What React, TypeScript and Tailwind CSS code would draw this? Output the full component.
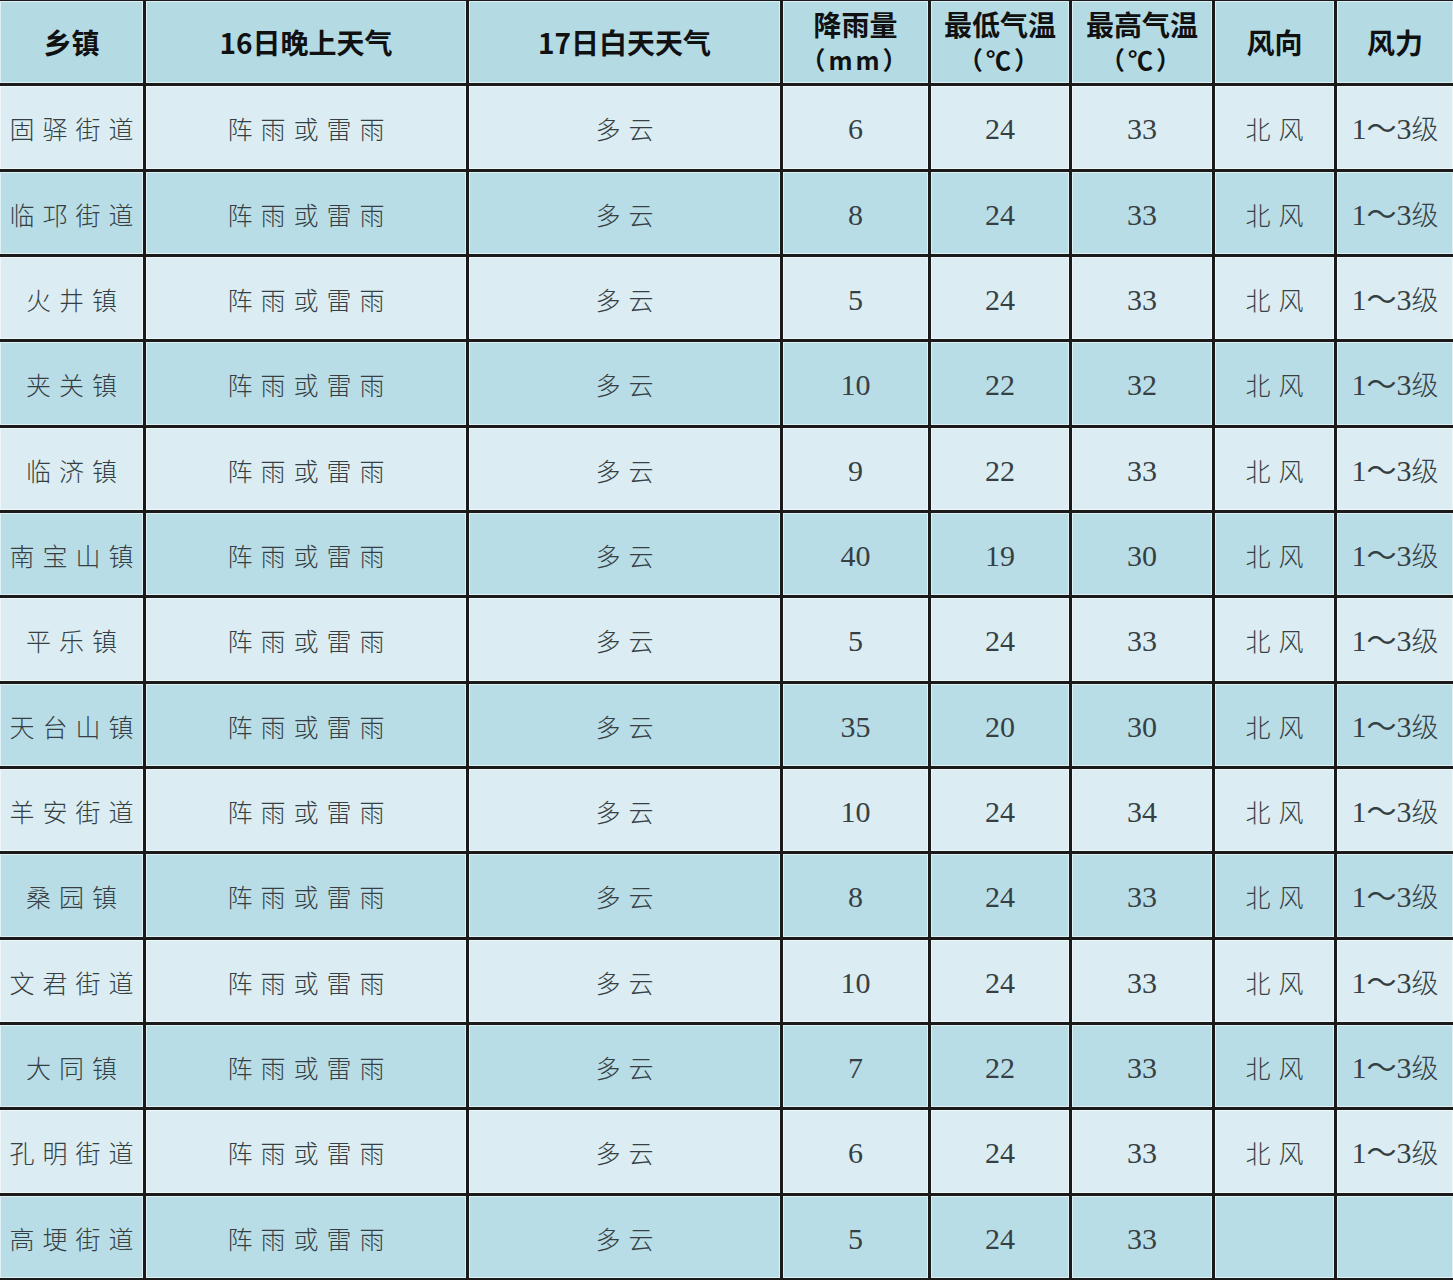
import React from "react";

const rows: [string, string, string, string][] = [
  ["固驿街道", "6", "24", "33"],
  ["临邛街道", "8", "24", "33"],
  ["火井镇", "5", "24", "33"],
  ["夹关镇", "10", "22", "32"],
  ["临济镇", "9", "22", "33"],
  ["南宝山镇", "40", "19", "30"],
  ["平乐镇", "5", "24", "33"],
  ["天台山镇", "35", "20", "30"],
  ["羊安街道", "10", "24", "34"],
  ["桑园镇", "8", "24", "33"],
  ["文君街道", "10", "24", "33"],
  ["大同镇", "7", "22", "33"],
  ["孔明街道", "6", "24", "33"],
  ["高埂街道", "5", "24", "33"],
];

const cjk = "font-['Noto_Sans_CJK_SC',sans-serif]";
const serif = "font-['Liberation_Serif','Noto_Sans_CJK_SC',serif]";

export default function App() {
  return (
    <div className="w-[1453px] h-[1280px] bg-[#1a1a1a] pt-[1px] pb-[2px]">
      <div className="grid h-full grid-cols-[143px_320px_311px_145px_138px_140px_119px_116px] grid-rows-[repeat(15,minmax(0,1fr))] gap-[3px]">
        {[
          ["乡镇"],
          ["16日晚上天气"],
          ["17日白天天气"],
          ["降雨量", "（mm）"],
          ["最低气温", "（℃）"],
          ["最高气温", "（℃）"],
          ["风向"],
          ["风力"],
        ].map((lines, i) => (
          <div
            key={i}
            className={`flex flex-col items-center justify-center bg-[#b4dbe4] shadow-[inset_0_0_0_1px_rgba(255,255,255,0.55)] ${cjk} font-bold text-[28px] leading-[35px] text-[#111]`}
          >
            {lines.map((l, j) => (
              <span key={j} className={j === 1 ? "font-semibold text-[25px] tracking-[3px]" : ""}>
                {l}
              </span>
            ))}
          </div>
        ))}
        {rows.map((r, idx) => {
          const bg = idx % 2 === 0 ? "bg-[#dbedf2]" : "bg-[#b9dde6]";
          const last = idx === rows.length - 1;
          const cell = `flex items-center justify-center pt-[3px] ${bg} shadow-[inset_0_0_0_1px_rgba(255,255,255,0.55)] text-[#363f44]`;
          const cjkCell = `${cell} ${cjk} text-[25px] tracking-[8px] font-light`;
          const numCell = `${cell} ${serif} text-[30px]`;
          return (
            <React.Fragment key={idx}>
              <div className={`${cjkCell} pl-[8px]`}>{r[0]}</div>
              <div className={`${cjkCell} pl-[8px]`}>阵雨或雷雨</div>
              <div className={`${cjkCell} pl-[8px]`}>多云</div>
              <div className={numCell}>{r[1]}</div>
              <div className={numCell}>{r[2]}</div>
              <div className={numCell}>{r[3]}</div>
              <div className={`${cjkCell} pl-[8px]`}>{last ? "" : "北风"}</div>
              <div className={`${cell} ${serif} text-[30px] whitespace-nowrap`}>
                {last ? "" : (
                  <span>
                    1～3<span className={`${cjk} font-light text-[27px]`}>级</span>
                  </span>
                )}
              </div>
            </React.Fragment>
          );
        })}
      </div>
    </div>
  );
}
